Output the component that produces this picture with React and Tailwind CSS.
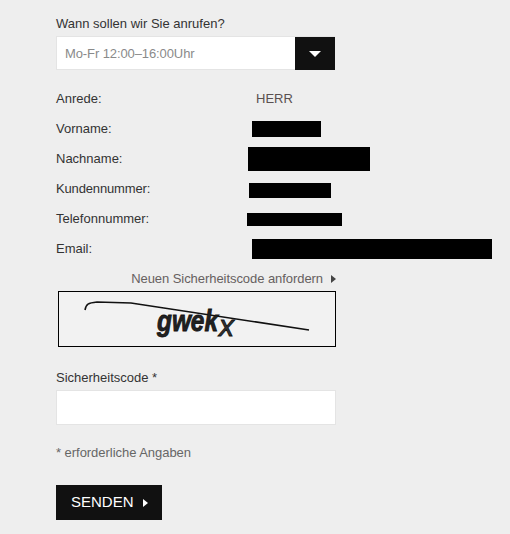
export default function App() {
  const font = { fontFamily: '"Liberation Sans", Arial, sans-serif' };
  const rows = [
    ["Vorname:", "ml-[61px] w-[69px] h-4", ""],
    ["Nachname:", "ml-[57px] w-[122px] h-6", ""],
    ["Kundennummer:", "ml-[58px] w-[82px] h-[15px] translate-y-[1px]", "tracking-[-0.15px]"],
    ["Telefonnummer:", "ml-[56px] w-[95px] h-[13px]", ""],
    ["Email:", "ml-[61px] w-[240px] h-5", ""],
  ];
  return (
    <div style={font} className="w-[510px] h-[534px] bg-[#eeeeee] pl-14 pt-[15px] text-[13px] text-[#333333] overflow-hidden">
      <div className="leading-[18px]">Wann sollen wir Sie anrufen?</div>
      <div className="mt-[3px] w-[279px] h-[34px] flex bg-white border border-[#e4e4e4] border-r-0">
        <div className="flex-1 pl-2 leading-[34px] text-[#8a8a8a] tracking-[-0.1px]">Mo-Fr 12:00–16:00Uhr</div>
        <div className="w-10 h-[33px] bg-[#111111] flex items-center justify-center">
          <div className="w-0 h-0 border-x-[6px] border-x-transparent border-t-[6px] border-t-white" />
        </div>
      </div>
      <div className="mt-[14px] flex h-[30px] items-center">
        <div className="w-[200px]">Anrede:</div>
        <div className="text-[#5a5050]">HERR</div>
      </div>
      {rows.map(([label, bar, track]) => (
        <div key={label} className="flex h-[30px] items-center">
          <div className={`w-[135px] shrink-0 whitespace-nowrap ${track}`}>{label}</div>
          <div className={`bg-black shrink-0 ${bar}`} />
        </div>
      ))}
      <div className="mt-[6px] w-[280px] h-[18px] flex items-center justify-end gap-2 text-[#666060] tracking-[-0.06px]">
        <span>Neuen Sicherheitscode anfordern</span>
        <div className="w-0 h-0 border-y-4 border-y-transparent border-l-[5px] border-l-[#444444]" />
      </div>
      <div className="mt-[3px] ml-0.5 w-[278px] h-14 border border-black bg-[#f2f2f2]">
        <svg width="276" height="54" viewBox="0 0 276 54">
          <path d="M26 18 C27 12 29 11 38 10 L72 11 L250 38" fill="none" stroke="#111" strokeWidth="1.6" />
          <text x="98" y="39" fontSize="29" fontStyle="italic" fontWeight="bold" fill="#222" stroke="#111" strokeWidth="0.8" textLength="61" lengthAdjust="spacingAndGlyphs" fontFamily="Liberation Sans">gwek</text>
          <text x="160" y="44" fontSize="30" fontStyle="italic" fill="#333" stroke="#111" strokeWidth="0.8" fontFamily="Liberation Sans">x</text>
        </svg>
      </div>
      <div className="mt-[22px] leading-[18px]">Sicherheitscode *</div>
      <input className="block mt-[3px] w-[280px] h-[35px] bg-white border border-[#e4e4e4] outline-none" />
      <div className="mt-[19px] leading-[18px] text-[#666666] tracking-[-0.04px]">* erforderliche Angaben</div>
      <button className="mt-[23px] w-[106px] h-[35px] bg-[#111111] text-white text-[15px] flex items-center pl-[15px] gap-[9px]">
        <span>SENDEN</span>
        <div className="w-0 h-0 border-y-4 border-y-transparent border-l-[5px] border-l-white" />
      </button>
    </div>
  );
}
